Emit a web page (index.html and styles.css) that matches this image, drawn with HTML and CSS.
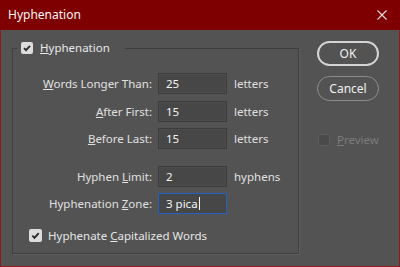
FILE: index.html
```html
<!DOCTYPE html>
<html>
<head>
<meta charset="utf-8">
<link rel="stylesheet" href="styles.css">
</head>
<body>
<div class="window">
  <div class="titlebar">
    <span class="title">Hyphenation</span>
    <svg class="close" width="10" height="10" viewBox="0 0 10 10"><path d="M0.5 0.5 L9.5 9.5 M9.5 0.5 L0.5 9.5" stroke="#f2dede" stroke-width="1.1" fill="none"/></svg>
  </div>
  <div class="content">
    <fieldset class="group">
      <legend class="legend">
        <span class="check on"><svg width="12" height="12" viewBox="0 0 12 12"><path d="M3 6.2 L5 8.2 L9 3.8" stroke="#2a2a2a" stroke-width="1.8" fill="none"/></svg></span>
        <span class="legend-text"><u>H</u>yphenation</span>
      </legend>
      <div class="rows">
        <div class="row"><label class="lbl"><u>W</u>ords Longer Than:</label><div class="field">25</div><span class="unit">letters</span></div>
        <div class="row"><label class="lbl"><u>A</u>fter First:</label><div class="field">15</div><span class="unit">letters</span></div>
        <div class="row"><label class="lbl"><u>B</u>efore Last:</label><div class="field">15</div><span class="unit">letters</span></div>
        <div class="row row-sep"><label class="lbl">Hyphen <u>L</u>imit:</label><div class="field">2</div><span class="unit">hyphens</span></div>
        <div class="row"><label class="lbl">Hyphenation <u>Z</u>one:</label><div class="field focus">3 pica<span class="caret"></span></div></div>
      </div>
      <div class="cap">
        <span class="check on"><svg width="13" height="13" viewBox="0 0 13 13"><path d="M3.3 6.7 L5.5 8.9 L9.7 4.2" stroke="#2a2a2a" stroke-width="1.9" fill="none"/></svg></span>
        <span class="cap-text">Hyphenate <u>C</u>apitalized Words</span>
      </div>
    </fieldset>
    <div class="side">
      <div class="btn btn-default">OK</div>
      <div class="btn">Cancel</div>
      <div class="preview">
        <span class="check off"></span>
        <span class="preview-text"><u>P</u>review</span>
      </div>
    </div>
  </div>
</div>
</body>
</html>
```
FILE: styles.css
```css
html, body {
  margin: 0;
  padding: 0;
  background: #535353;
}
body {
  font-family: "Noto Sans", "Open Sans", sans-serif;
  font-size: 11.5px;
  color: #e6e6e6;
}
.window {
  width: 400px;
  height: 267px;
  box-sizing: border-box;
  border: 1px solid #8e1c1c;
  border-top: none;
  display: flex;
  flex-direction: column;
  background: #535353;
}
.titlebar {
  height: 30px;
  margin: 0 -1px;
  background: #7f0000;
  display: flex;
  align-items: center;
  justify-content: space-between;
  padding: 0 13px 0 8px;
  flex: none;
}
.title {
  color: #f4f4f4;
  font-size: 12px;
  line-height: 16px;
}
.close {
  display: block;
}
.content {
  display: flex;
  align-items: flex-start;
  padding: 11px 0 0 11px;
}
.group {
  margin: 0;
  padding: 0;
  width: 287px;
  height: 213px;
  box-sizing: border-box;
  border: 1px solid #3f3f3f;
  box-shadow: 1px 1px 0 #5e5e5e;
  min-width: 0;
  display: flex;
  flex-direction: column;
}
.legend {
  margin-left: 4px;
  padding: 0 0 0 4px;
  width: 104px;
  height: 14px;
  display: flex;
  align-items: center;
  gap: 7px;
}
.check {
  width: 12px;
  height: 12px;
  border-radius: 2px;
  display: inline-flex;
  flex: none;
}
.check.on {
  background: #dcdcdc;
}
.check.off {
  background: #4a4a4a;
  border: 1px solid #5c5c5c;
  box-sizing: border-box;
}
.legend-text {
  color: #e8e8e8;
  line-height: 14px;
}
.rows {
  display: flex;
  flex-direction: column;
  gap: 6.5px;
  padding-top: 18px;
}
.row {
  display: flex;
  align-items: center;
  height: 21px;
}
.row-sep {
  margin-top: 10px;
}
.lbl {
  width: 139px;
  text-align: right;
  color: #e0e0e0;
}
.field {
  margin-left: 6px;
  width: 69px;
  height: 21px;
  box-sizing: border-box;
  background: #474747;
  border: 1px solid #3d3d3d;
  box-shadow: inset 0 0 0 1px #4c4c4c;
  color: #f4f4f4;
  padding-left: 7px;
  display: flex;
  align-items: center;
}
.field.focus {
  border: 1px solid #1e63c4;
  box-shadow: none;
}
.caret {
  width: 1px;
  height: 13px;
  background: #f4f4f4;
  margin-left: 1px;
}
.unit {
  margin-left: 7px;
  color: #e0e0e0;
}
.cap {
  display: flex;
  align-items: center;
  gap: 6px;
  margin-top: auto;
  margin-bottom: 10px;
  padding-left: 16px;
}
.cap .check {
  width: 13px;
  height: 13px;
}
.side {
  margin-left: 18px;
  display: flex;
  flex-direction: column;
  padding-top: 0;
}
.btn {
  width: 62px;
  height: 25px;
  box-sizing: border-box;
  border: 1px solid #8c8c8c;
  border-radius: 13px;
  display: flex;
  align-items: center;
  justify-content: center;
  color: #f0f0f0;
  font-size: 12px;
  margin-bottom: 10px;
}
.btn-default {
  border: 2px solid #d4d4d4;
}
.preview {
  margin-top: 21px;
  display: flex;
  align-items: center;
  gap: 7px;
  padding-left: 1px;
}
.preview .check {
  width: 12px;
  height: 12px;
}
.preview-text {
  color: #7c7c7c;
}
```
